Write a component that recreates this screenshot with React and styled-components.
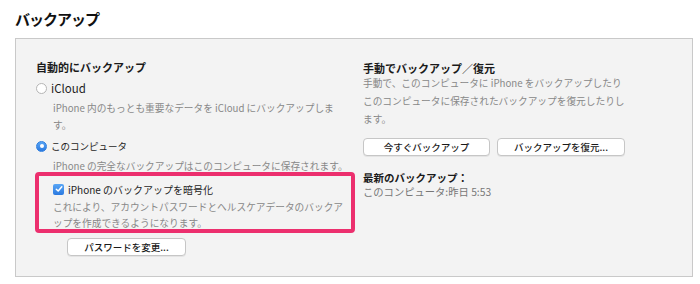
import React from 'react';
import styled, { createGlobalStyle } from 'styled-components';

const GlobalStyle = createGlobalStyle`
  body {
    margin: 0;
    background: #fff;
    font-family: "Noto Sans CJK JP", "Liberation Sans", sans-serif;
    color: #222;
  }
`;

const Page = styled.div`
  width: 700px;
  height: 284px;
  padding: 9px 7px 0 15px;
  box-sizing: border-box;
`;

const Heading = styled.h2`
  margin: 0 0 9px;
  font-size: 15px;
  line-height: 20px;
  font-weight: 700;
  color: #111;
  letter-spacing: -1px;
`;

const Panel = styled.div`
  border: 1px solid #c9c9c9;
  background: #f3f3f3;
  padding: 21px 0 20px 20px;
  display: grid;
  grid-template-columns: 327px 1fr;
`;

const Column = styled.div`
  display: flex;
  flex-direction: column;
  align-items: flex-start;
`;

const SectionTitle = styled.div`
  font-size: ${p => p.$size || 11}px;
  line-height: 14px;
  font-weight: 700;
  color: #1a1a1a;
  margin-top: ${p => p.$top || 0}px;
  white-space: nowrap;
`;

const OptionRow = styled.label`
  display: flex;
  align-items: center;
  gap: 4px;
  height: 18px;
  font-size: ${p => p.$size || 10}px;
  color: #1e1e1e;
  margin-top: ${p => p.$top || 0}px;
  white-space: nowrap;
`;

const Radio = styled.span`
  width: 11px;
  height: 11px;
  box-sizing: border-box;
  border-radius: 50%;
  flex: none;
  display: flex;
  align-items: center;
  justify-content: center;
  border: 1px solid ${p => (p.$on ? '#2f7fe0' : '#b5b5b5')};
  background: ${p => (p.$on ? 'linear-gradient(#5aa6f5, #2a79e0)' : '#fff')};
  &::after {
    content: '';
    display: ${p => (p.$on ? 'block' : 'none')};
    width: 4px;
    height: 4px;
    border-radius: 50%;
    background: #fff;
  }
`;

const Check = styled.span`
  width: 11px;
  height: 11px;
  border-radius: 2px;
  flex: none;
  background: linear-gradient(#5aa6f5, #2a79e0);
  display: flex;
  align-items: center;
  justify-content: center;
`;

const Desc = styled.div`
  font-size: 9.7px;
  line-height: ${p => p.$lh || 17}px;
  color: #888;
  margin-left: ${p => p.$indent || 0}px;
  margin-top: ${p => p.$top || 0}px;
  white-space: nowrap;
`;

const Highlight = styled.div`
  margin: 0 0 0 -1px;
  width: 320px;
  height: 61px;
  box-sizing: border-box;
  border: 4px solid #ec2f6e;
  border-radius: 4px;
  padding: 4px 0 0 14px;
`;

const Button = styled.button`
  width: ${p => p.$w}px;
  height: 18px;
  margin-top: ${p => p.$top || 0}px;
  margin-left: ${p => p.$left || 0}px;
  padding: 0;
  border: 1px solid #c6c6c6;
  border-radius: 4px;
  background: #fff;
  box-shadow: 0 1px 0 rgba(0, 0, 0, 0.06);
  font-family: inherit;
  font-size: 9.5px;
  font-weight: 500;
  color: #1a1a1a;
  line-height: 16px;
`;

const ButtonRow = styled.div`
  display: flex;
  gap: 7px;
  margin-top: 10px;
`;

const Status = styled.div`
  font-size: 10.3px;
  line-height: 14px;
  color: #777;
  white-space: nowrap;
`;

const CheckMark = () => (
  <svg width="8" height="8" viewBox="0 0 8 8">
    <path d="M1.3 4.2 L3.2 6 L6.8 1.8" fill="none" stroke="#fff" strokeWidth="1.5" strokeLinecap="round" strokeLinejoin="round" />
  </svg>
);

export default function App() {
  return (
    <Page>
      <GlobalStyle />
      <Heading>バックアップ</Heading>
      <Panel>
        <Column>
          <SectionTitle>自動的にバックアップ</SectionTitle>
          <OptionRow $top={5} $size={11.5}>
            <Radio />
            iCloud
          </OptionRow>
          <Desc $indent={17} $top={3}>
            iPhone 内のもっとも重要なデータを iCloud にバックアップしま
            <br />
            す。
          </Desc>
          <OptionRow $top={3} $size={9.5}>
            <Radio $on />
            このコンピュータ
          </OptionRow>
          <Desc $indent={17} $lh={12} $top={5}>
            iPhone の完全なバックアップはこのコンピュータに保存されます。
          </Desc>
          <Highlight>
            <OptionRow>
              <Check>
                <CheckMark />
              </Check>
              iPhone のバックアップを暗号化
            </OptionRow>
            <Desc $lh={16} $top={1}>
              これにより、アカウントパスワードとヘルスケアデータのバックア
              <br />
              ップを作成できるようになります。
            </Desc>
          </Highlight>
          <Button $w={119} $top={5} $left={31}>パスワードを変更...</Button>
        </Column>
        <Column>
          <SectionTitle $top={1}>手動でバックアップ／復元</SectionTitle>
          <Desc $lh={18} $top={-1}>
            手動で、このコンピュータに iPhone をバックアップしたり
            <br />
            このコンピュータに保存されたバックアップを復元したりし
            <br />
            ます。
          </Desc>
          <ButtonRow>
            <Button $w={127}>今すぐバックアップ</Button>
            <Button $w={128}>バックアップを復元...</Button>
          </ButtonRow>
          <SectionTitle $size={10.5} $top={15}>最新のバックアップ：</SectionTitle>
          <Status>このコンピュータ:昨日 5:53</Status>
        </Column>
      </Panel>
    </Page>
  );
}
